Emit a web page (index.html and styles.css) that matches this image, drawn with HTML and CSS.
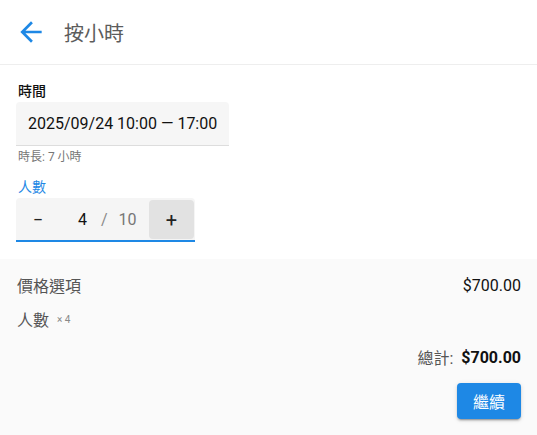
FILE: index.html
```html
<!DOCTYPE html>
<html lang="zh-Hant">
<head>
<meta charset="utf-8">
<title>按小時</title>
<link rel="stylesheet" href="styles.css">
</head>
<body>
<div class="page">
  <header class="topbar">
    <button class="back" aria-label="返回">
      <svg viewBox="0 0 24 24" width="32" height="32"><path fill="#1e88e5" d="M20 11H7.83l5.59-5.59L12 4l-8 8 8 8 1.41-1.41L7.83 13H20v-2z"/></svg>
    </button>
    <h1 class="title">按小時</h1>
  </header>

  <main class="form">
    <div class="field">
      <label class="label">時間</label>
      <div class="input">2025/09/24 10:00 — 17:00</div>
      <div class="hint">時長: 7 小時</div>
    </div>

    <div class="field field-people">
      <label class="label label-active">人數</label>
      <div class="stepper">
        <button class="step step-minus">−</button>
        <div class="count"><span class="cur">4</span><span class="sep">/</span><span class="max">10</span></div>
        <button class="step step-plus">+</button>
      </div>
    </div>
  </main>

  <section class="summary">
    <div class="row">
      <span class="row-label">價格選項</span>
      <span class="row-value">$700.00</span>
    </div>
    <div class="row">
      <span class="row-label">人數 <span class="qty">× 4</span></span>
    </div>
    <div class="total">
      <span class="total-label">總計:</span>
      <span class="total-value">$700.00</span>
    </div>
    <div class="actions">
      <button class="primary">繼續</button>
    </div>
  </section>
</div>
</body>
</html>
```

FILE: styles.css
```css
* { box-sizing: border-box; }
html, body { margin: 0; padding: 0; background: #fff; }
body {
  font-family: Roboto, "Noto Sans CJK TC", "Noto Sans", sans-serif;
  color: #111;
}
button { font-family: inherit; border: 0; background: none; padding: 0; cursor: pointer; }

.page { width: 537px; min-height: 435px; display: flex; flex-direction: column; }

.topbar {
  height: 65px;
  border-bottom: 1px solid #eeeeee;
  display: flex;
  align-items: center;
  padding-left: 15px;
}
.back { width: 32px; height: 32px; display: flex; }
.title {
  margin: 0 0 0 17px;
  font-size: 20px;
  font-weight: 400;
  color: #5c5c5c;
}

.form { padding: 16px 16px 17px; }
.field { display: flex; flex-direction: column; align-items: flex-start; }
.label {
  font-size: 14px;
  line-height: 20px;
  font-weight: 500;
  color: #111;
  padding-left: 2px;
  margin-bottom: 1px;
}
.label-active { color: #1e88e5; font-weight: 400; }
.input {
  width: 213px;
  height: 44px;
  background: #f6f6f6;
  border-radius: 4px 4px 0 0;
  border-bottom: 1px solid #dddddd;
  font-size: 16px;
  line-height: 43px;
  padding-left: 12px;
  color: #111;
}
.hint {
  font-size: 12px;
  line-height: 16px;
  color: #777;
  padding-left: 2px;
  margin-top: 3px;
}
.field-people { margin-top: 12px; }
.stepper {
  width: 179px;
  height: 44px;
  background: #f5f5f5;
  border-radius: 4px 4px 0 0;
  border-bottom: 2px solid #1e88e5;
  display: flex;
  align-items: center;
  padding: 2px 1px 1px 0;
}
.step { height: 39px; font-size: 18px; color: #222; }
.step-minus { width: 44px; }
.step-plus { width: 45px; background: #e2e2e2; border-radius: 4px; font-size: 20px; }
.count {
  flex: 1;
  display: flex;
  align-items: center;
  font-size: 16px;
  padding-left: 18px;
}
.cur { color: #111; }
.sep { color: #8a8a8a; margin: 0 11px 0 14px; }
.max { color: #777; }

.summary {
  flex: 1;
  background: #fafafa;
  padding: 14px 16px 16px 17px;
}
.row {
  display: flex;
  justify-content: space-between;
  align-items: center;
  height: 24px;
  margin-bottom: 10px;
}
.row-label { font-size: 16px; color: #555; display: flex; align-items: center; }
.row-value { font-size: 16px; color: #111; }
.qty { font-size: 10px; color: #888; margin-left: 8px; }
.total {
  display: flex;
  justify-content: flex-end;
  align-items: center;
  height: 24px;
  margin-top: 14px;
  gap: 8px;
}
.total-label { font-size: 16px; color: #555; }
.total-value { font-size: 16px; font-weight: 700; color: #111; }
.actions { display: flex; justify-content: flex-end; margin-top: 14px; }
.primary {
  background: #1e88e5;
  color: #fff;
  font-size: 16px;
  height: 36px;
  padding: 0 16px;
  border-radius: 4px;
  box-shadow: 0 3px 1px -2px rgba(0,0,0,.2), 0 2px 2px 0 rgba(0,0,0,.14), 0 1px 5px 0 rgba(0,0,0,.12);
}
```
